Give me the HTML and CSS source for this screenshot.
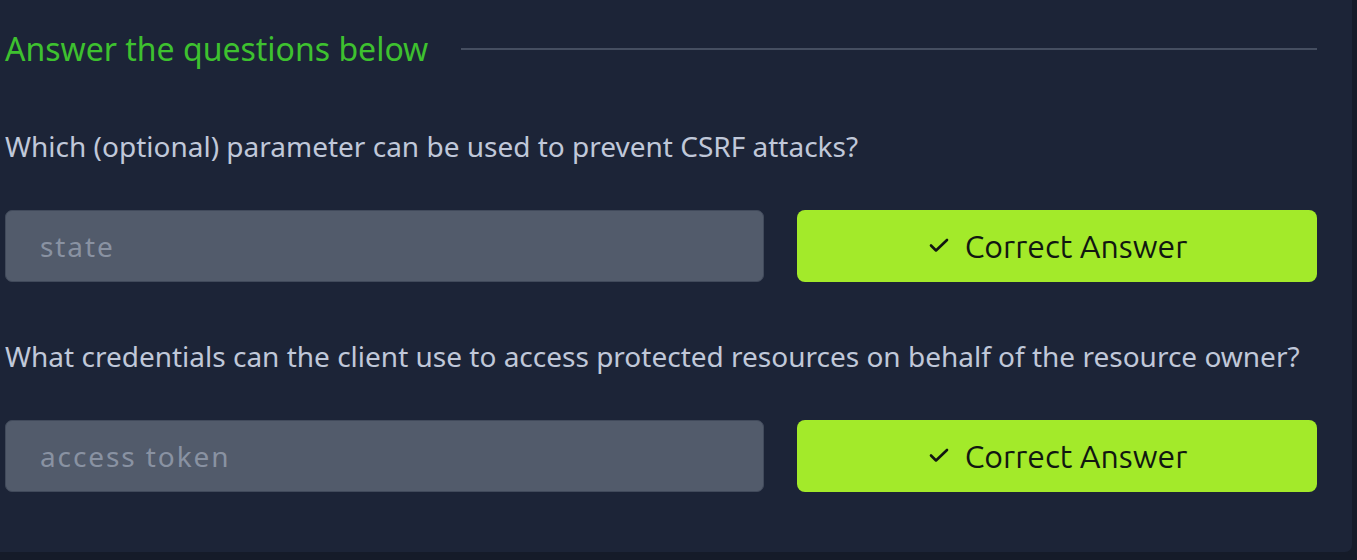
FILE: index.html
```html
<!DOCTYPE html>
<html lang="en">
<head>
  <meta charset="UTF-8">
  <meta name="viewport" content="width=device-width, initial-scale=1">
  <title>Answer the questions below</title>
  <link rel="stylesheet" href="styles.css">
</head>
<body>
  <div class="card">
    <div class="section-title">
      <h2>Answer the questions below</h2>
      <span class="rule"></span>
    </div>

    <div class="question">
      <p class="question-text">Which (optional) parameter can be used to prevent CSRF attacks?</p>
      <div class="answer-row">
        <input class="answer-input" type="text" value="state" disabled>
        <button class="submit-btn correct">
          <svg class="check" viewBox="0 0 24 24" width="24" height="24"><path d="M4 12.5l5 5L20 7" fill="none" stroke="currentColor" stroke-width="2.6" stroke-linecap="round" stroke-linejoin="round"/></svg>
          Correct Answer
        </button>
      </div>
    </div>

    <div class="question">
      <p class="question-text">What credentials can the client use to access protected resources on behalf of the resource owner?</p>
      <div class="answer-row">
        <input class="answer-input" type="text" value="access token" disabled>
        <button class="submit-btn correct">
          <svg class="check" viewBox="0 0 24 24" width="24" height="24"><path d="M4 12.5l5 5L20 7" fill="none" stroke="currentColor" stroke-width="2.6" stroke-linecap="round" stroke-linejoin="round"/></svg>
          Correct Answer
        </button>
      </div>
    </div>
  </div>
</body>
</html>
```

FILE: styles.css
```css
body {
  margin: 0;
  background: #151b29;
  font-family: "Noto Sans", "Open Sans", sans-serif;
  overflow: hidden;
}
.card {
  width: 1352px;
  height: 552px;
  box-sizing: border-box;
  background: #1c2437;
  border-bottom-right-radius: 7px;
  padding: 22px 35px 0 5px;
}
.section-title {
  display: flex;
  align-items: center;
  gap: 33px;
  margin-bottom: 52px;
}
.section-title h2 {
  margin: 0;
  font-size: 32px;
  font-weight: 400;
  color: #3ec12f;
  line-height: 54px;
}
.rule {
  flex: 1;
  height: 2px;
  background: #454e60;
}
.question {
  margin-bottom: 56px;
}
.question-text {
  margin: 0 0 46px 0;
  font-size: 28px;
  color: #c0c8d9;
  line-height: 36px;
}
.answer-row {
  display: flex;
  gap: 33px;
}
.answer-input {
  width: 759px;
  height: 72px;
  box-sizing: border-box;
  background: #525b6b;
  border: 1px solid #414a5b;
  border-radius: 7px;
  padding: 0 34px;
  font-family: "Noto Sans", "Open Sans", sans-serif;
  font-size: 28px;
  letter-spacing: 1.9px;
  color: #8992a2;
  outline: none;
}
.submit-btn {
  flex: 1;
  height: 72px;
  display: flex;
  align-items: center;
  justify-content: center;
  gap: 14px;
  border: none;
  border-radius: 8px;
  background: #a3ea2a;
  color: #111711;
  font-family: "Ubuntu", "Noto Sans", sans-serif;
  font-size: 32px;
  cursor: pointer;
}
.check {
  margin-top: -3px;
}
```
